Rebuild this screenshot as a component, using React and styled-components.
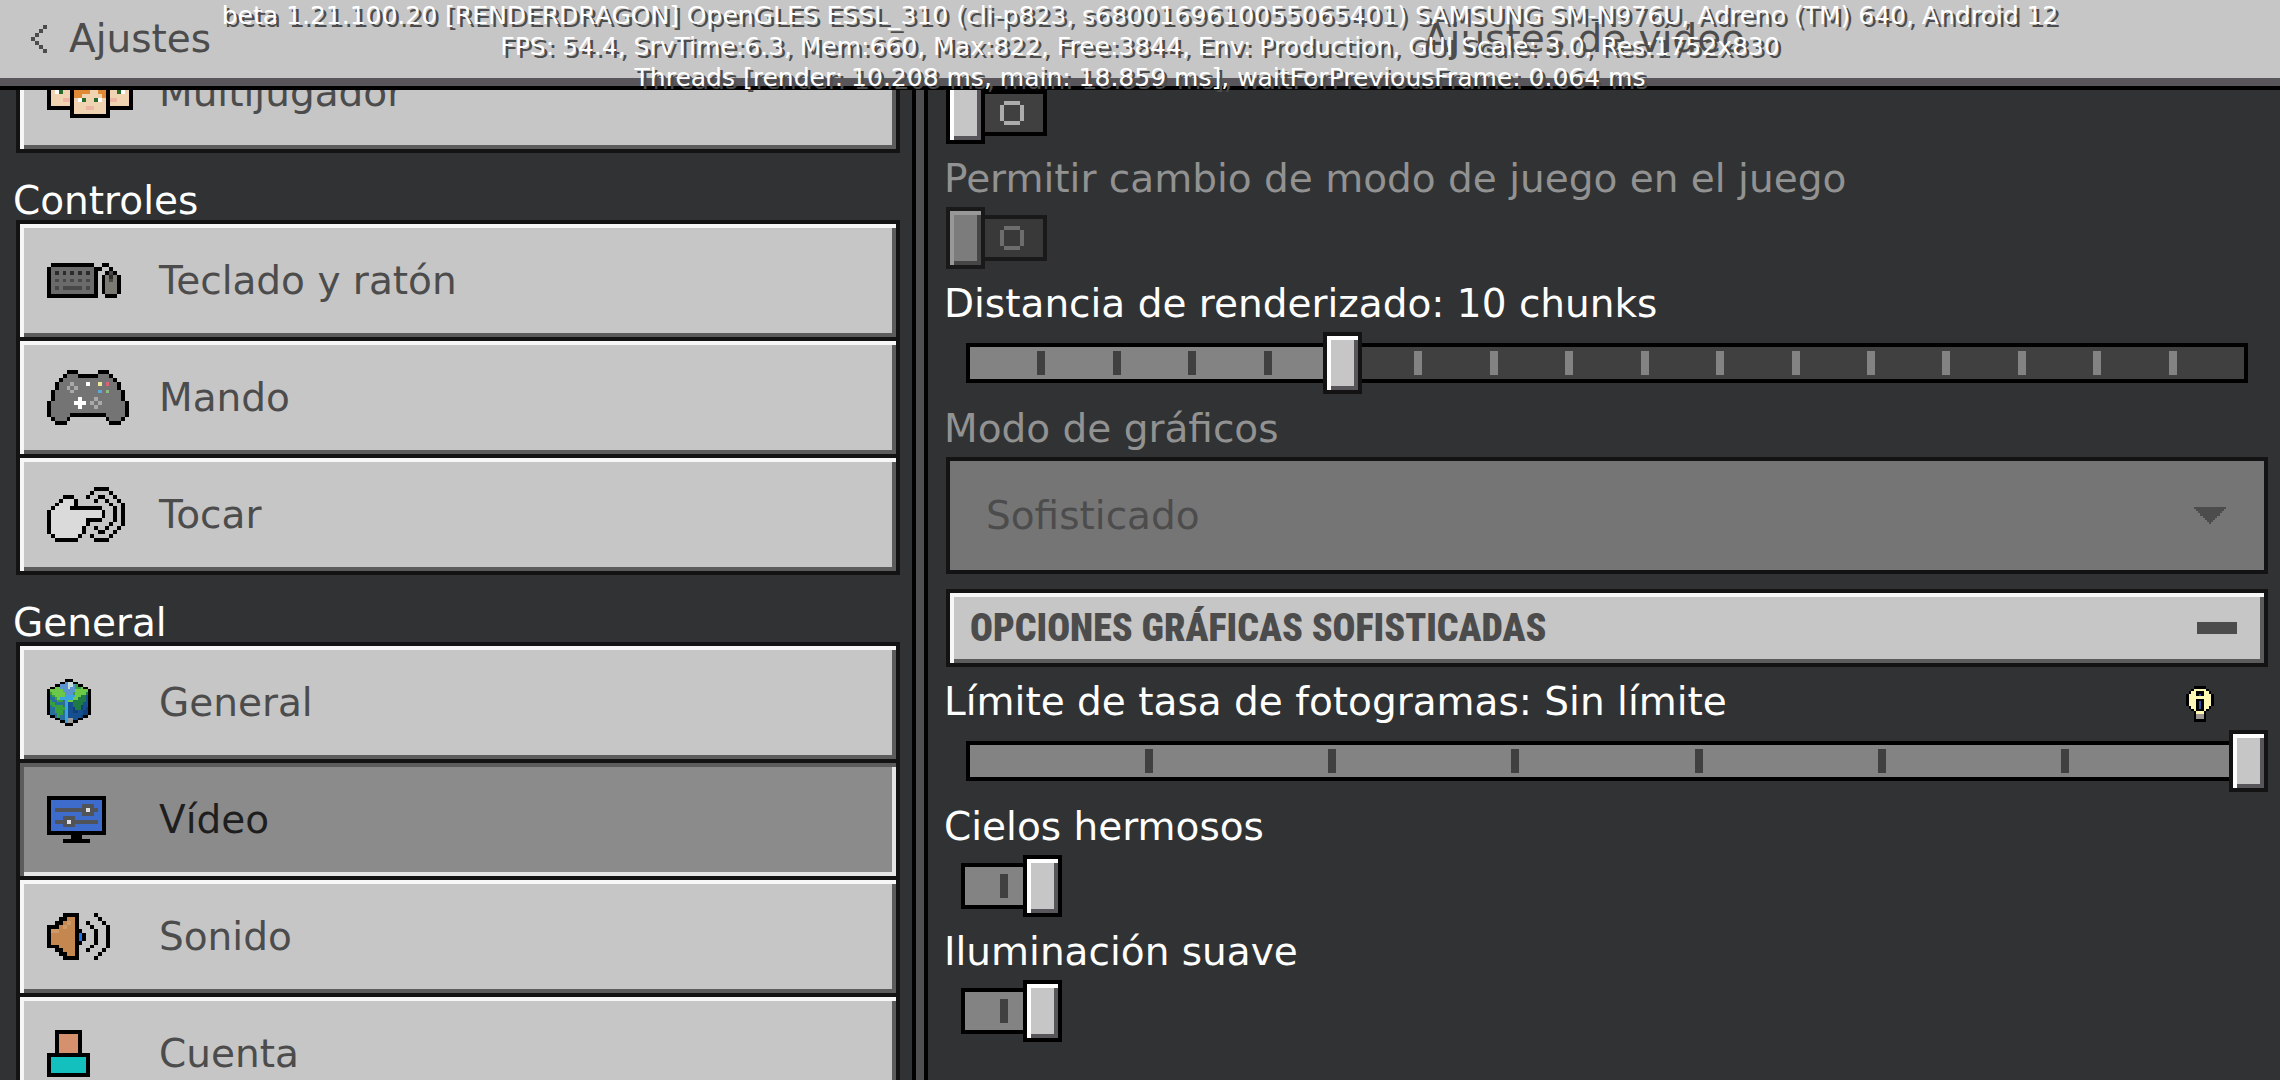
import React, { useLayoutEffect, useRef, useState } from "react";
import styled, { createGlobalStyle, css } from "styled-components";

const palette = {
  K: "#000000",
};

const icons = {
  players: {
    colors: { o: "#e08a35", s: "#f0d3b0", w: "#ffffff", e: "#2a6a2a", p: "#ecb5a4" },
    rows: [
      "......KKKKKKKKKK......",
      "......KooooooooK......",
      "KKKKKKKooooooooKKKKKKK",
      "KoooooKooooooooKoooooK",
      "KoooooKooooooooKoooooK",
      "KooossKooooooooKssoooK",
      "KswessKoooossooKssewsK",
      "KsssssKoosssssoKsssssK",
      "KsssppKswessewsKppsssK",
      "KsssssKssssssssKsssssK",
      "KKKKKKKsssppsssKKKKKKK",
      "......KssssssssK......",
      "......KKKKKKKKKK......",
    ],
  },
  keyboard: {
    colors: { g: "#6b6b6b", d: "#2b2b2b", n: "#484848", m: "#7b7972" },
    rows: [
      ".KKKKKKKKKKK..KK...",
      "KgggggggggggKK..K..",
      "KgdgdgdgdgdgK..KnK.",
      "KgggggggggggK.KmdmK",
      "KgngngngngngK.KmnmK",
      "KgggggggggggK.KmmmK",
      "KgngnnnnngngK.KmmmK",
      "KgggggggggggK.KmmmK",
      "KKKKKKKKKKKKK..KKK.",
    ],
  },
  gamepad: {
    colors: {
      g: "#747474",
      l: "#a9a9a9",
      w: "#ffffff",
      y: "#efe79a",
      r: "#d9627a",
      b: "#5aa7dc",
      e: "#93b985",
    },
    rows: [
      ".....KKK.....KKK.....",
      "....KgggKKKKKgggK....",
      "...KgggggggggggggK...",
      "..KggglgggwggygrggK..",
      "..KgglglggggggggggK..",
      ".KgggglggggggbgegggK.",
      ".KgggggggggggggggggK.",
      ".KggggggwggglggggggK.",
      "KggggggwwwglglggggggK",
      "KgggggggwggglgggggggK",
      "KgggggggggggggggggggK",
      "KgggggKKKKKKKKKgggggK",
      ".KgggK.........KgggK.",
      "..KKK...........KKK..",
    ],
  },
  touch: {
    colors: { w: "#dadada" },
    rows: [
      "............KKKK....",
      "...........K....K...",
      "....KKK...K..KK..K..",
      "...KwwwK....K..K..K.",
      "..KwwwwK........K..K",
      ".KwwwwKKKKKKKK...K.K",
      "KwwwwwwwwwwwwwK..K.K",
      "KwwwwwwwwwwwwwK..K.K",
      "KwwwwwwwwwKKKK...K.K",
      "KwwwwwwwwwK.....K..K",
      "KwwwwwwwwK..K..K..K.",
      "KwwwwwwwwK...KK..K..",
      ".KwwwwwwK..K....K...",
      "..KKKKKK....KKKK....",
    ],
  },
  globe: {
    colors: {
      b: "#5b93d0",
      w: "#c3dcdc",
      G: "#6cc848",
      g: "#35a03c",
      d: "#1f7b45",
      t: "#2a6f9c",
      c: "#3ba4e0",
      e: "#164f90",
      n: "#123f78",
      s: "#9c9c9c",
    },
    rows: [
      ".......KKK.......",
      ".....KKbwwKK.....",
      "...KKbbbwwbgKK...",
      ".KKGGbbbwbbggGKK.",
      "KGGGGGbbbbbGGGGGK",
      "KgGGGGGbbbgGGGGdK",
      "KtgGGGGccccGGddeK",
      "KttgGcccccGGdddeK",
      "KgttggtcGGdddddeK",
      "KggttttceeddddeeK",
      "KtggggtceedddneeK",
      "KttggggceenddnenK",
      "KttgggtceenneennK",
      "KtttggtceeeeeennK",
      ".KKtgttceeeeenKK.",
      "...KKttcsseeKK...",
      ".....KKcssKK.....",
      ".......KKK.......",
    ],
  },
  video: {
    colors: { b: "#3d6ccc", s: "#505358", w: "#e0e0e0" },
    rows: [
      "KKKKKKKKKKKKKKK",
      "KbbbbbbbbbbbbbK",
      "KbbbbbbbbsssbbK",
      "KbsssssssswssbK",
      "KbbbbbbbbsssbbK",
      "KbbbsssbbbbbbbK",
      "KbssswsssssssbK",
      "KbbbsssbbbbbbbK",
      "KbbbbbbbbbbbbbK",
      "KKKKKKKKKKKKKKK",
      "......KKK......",
      "....KKKKKKK....",
    ],
  },
  sound: {
    colors: { o: "#c4874f", l: "#cf9a6a", u: "#1f74ea" },
    rows: [
      "....KKKK....K...",
      "...KKooK.....K..",
      "..KKoloK..K...K.",
      "KKKolooK...K...K",
      "KllooooKK...K..K",
      "KooooooKuK..K..K",
      "KooooooKuK..K..K",
      "KooooooKK...K..K",
      "KKKooooK...K...K",
      "..KKoooK..K...K.",
      "...KKooK.....K..",
      "....KKKK....K...",
    ],
  },
  account: {
    colors: { s: "#d5906e", t: "#14c0bd" },
    rows: [
      "..KKKKKKK..",
      "..KsssssK..",
      "..KsssssK..",
      "..KsssssK..",
      "..KsssssK..",
      "..KsssssK..",
      "KKKKKKKKKKK",
      "KtttttttttK",
      "KtttttttttK",
      "KtttttttttK",
      "KtttttttttK",
      "KKKKKKKKKKK",
    ],
  },
  bulb: {
    colors: { y: "#fdf8b4", b: "#2c4f9e", h: "#9a9590" },
    rows: [
      "...KKKKK...",
      "..KyyyyyK..",
      ".KyyKKKyyK.",
      "KyyyKbKyyyK",
      "KyyyyyyyyyK",
      "KyyyKKKyyyK",
      "KyyyKbKyyyK",
      "KyyyKbKyyyK",
      ".KyyKbKyyK.",
      "..KyKKKyK..",
      "...KyyyK...",
      "...KhhhK...",
      "...KhhhK...",
      "...KKKKK...",
    ],
  },
  back: {
    colors: { g: "#4c4c4c" },
    rows: ["...g", "..g.", ".g..", "g...", ".g..", "..g.", "...g"],
  },
  off: {
    colors: { g: "currentColor" },
    rows: [".gggg.", "g....g", "g....g", "g....g", "g....g", ".gggg."],
  },
  arrow: {
    colors: { g: "#4c4c4c" },
    rows: [
      "ggggggggggggggg",
      ".ggggggggggggg.",
      "..ggggggggggg..",
      "...ggggggggg...",
      "....ggggggg....",
      ".....ggggg.....",
      "......ggg......",
      ".......g.......",
    ],
  },
};

function PixelIcon({ name, width }) {
  const { rows, colors } = icons[name];
  const cols = rows[0].length;
  const all = { ...palette, ...colors };
  return (
    <Pixels
      width={width}
      viewBox={`0 0 ${cols} ${rows.length}`}
      shapeRendering="crispEdges"
      aria-hidden="true"
    >
      {rows.map((row, y) =>
        [...row].map((c, x) =>
          c === "." ? null : (
            <rect key={`${x}-${y}`} x={x} y={y} width="1" height="1" fill={all[c]} />
          )
        )
      )}
    </Pixels>
  );
}

const menu = [
  { items: [{ id: "players", label: "Multijugador", width: 86 }] },
  {
    title: "Controles",
    items: [
      { id: "keyboard", label: "Teclado y ratón", width: 74 },
      { id: "gamepad", label: "Mando", width: 82 },
      { id: "touch", label: "Tocar", width: 78 },
    ],
  },
  {
    title: "General",
    items: [
      { id: "globe", label: "General", width: 44 },
      { id: "video", label: "Vídeo", width: 59 },
      { id: "sound", label: "Sonido", width: 63 },
      { id: "account", label: "Cuenta", width: 43 },
    ],
  },
];

const debugLines = [
  "beta 1.21.100.20 [RENDERDRAGON] OpenGLES ESSL_310 (cli-p823, s6800169610055065401) SAMSUNG SM-N976U, Adreno (TM) 640, Android 12",
  "FPS: 54.4, SrvTime:6.3, Mem:660, Max:822, Free:3844, Env: Production, GUI Scale: 3.0, Res:1752x830",
  "Threads [render: 10.208 ms, main: 18.859 ms], waitForPreviousFrame: 0.064 ms",
];

function Toggle({ id, label, defaultOn, disabled }) {
  const [on, setOn] = useState(!!defaultOn);
  return (
    <Setting>
      {label && (
        <SettingLabel htmlFor={id} $disabled={disabled}>
          {label}
        </SettingLabel>
      )}
      <Control>
        <ToggleBox $on={on} $disabled={disabled}>
          <ToggleInput
            id={id}
            type="checkbox"
            checked={on}
            disabled={disabled}
            aria-label={label ? undefined : "Interruptor"}
            onChange={() => setOn(!on)}
          />
          {on ? <OnMark /> : <PixelIcon name="off" width={24} />}
          <ToggleThumb $on={on} $disabled={disabled} />
        </ToggleBox>
      </Control>
    </Setting>
  );
}

function Slider({ id, min, max, value, onChange }) {
  const steps = max - min;
  return (
    <SliderBox>
      <Track $steps={steps}>
        {Array.from({ length: steps }, (_, i) => (
          <Segment key={i} $filled={min + i < value}>
            {i < steps - 1 && <Tick $filled={min + i < value} />}
          </Segment>
        ))}
      </Track>
      <Range
        id={id}
        type="range"
        min={min}
        max={max}
        value={value}
        onChange={(e) => onChange(Number(e.target.value))}
      />
    </SliderBox>
  );
}

export default function App() {
  const [current, setCurrent] = useState("video");
  const [distance, setDistance] = useState(10);
  const [limit, setLimit] = useState(7);
  const [open, setOpen] = useState(true);
  const sideRef = useRef(null);
  const panelRef = useRef(null);

  useLayoutEffect(() => {
    sideRef.current.scrollTop = 58;
    panelRef.current.scrollTop = 8;
  }, []);

  return (
    <Page>
      <GlobalStyle />
      <Header>
        <Back type="button">
          <PixelIcon name="back" width={16} />
          Ajustes
        </Back>
        <Title>Ajustes de vídeo</Title>
      </Header>
      <Main>
        <Sidebar ref={sideRef}>
          {menu.map((group, i) => (
            <div key={i}>
              {group.title && <GroupTitle>{group.title}</GroupTitle>}
              <Group>
                {group.items.map(({ id, label, width }) => (
                  <MenuButton
                    key={id}
                    type="button"
                    $active={id === current}
                    onClick={() => setCurrent(id)}
                  >
                    <IconSlot>
                      <PixelIcon name={id} width={width} />
                    </IconSlot>
                    {label}
                  </MenuButton>
                ))}
              </Group>
            </div>
          ))}
        </Sidebar>
        <Divider />
        <Panel ref={panelRef}>
          <Toggle id="previous" />
          <Toggle
            id="gamemode"
            label="Permitir cambio de modo de juego en el juego"
            disabled
          />
          <Setting>
            <SettingLabel htmlFor="distance">
              Distancia de renderizado: {distance} chunks
            </SettingLabel>
            <Control>
              <Slider id="distance" min={5} max={22} value={distance} onChange={setDistance} />
            </Control>
          </Setting>
          <Setting>
            <SettingLabel htmlFor="graphics" $disabled>
              Modo de gráficos
            </SettingLabel>
            <Control>
              <SelectBox>
                <Select id="graphics" disabled>
                  <option>Sofisticado</option>
                </Select>
                <PixelIcon name="arrow" width={32} />
              </SelectBox>
            </Control>
          </Setting>
          <Setting>
            <Control>
              <Accordion type="button" aria-expanded={open} onClick={() => setOpen(!open)}>
                Opciones gráficas sofisticadas
                <Minus />
              </Accordion>
            </Control>
          </Setting>
          {open && (
            <>
              <Setting>
                <LabelRow>
                  <SettingLabel htmlFor="limit">
                    Límite de tasa de fotogramas: {limit === 7 ? "Sin límite" : limit * 30}
                  </SettingLabel>
                  <PixelIcon name="bulb" width={28} />
                </LabelRow>
                <Control>
                  <Slider id="limit" min={0} max={7} value={limit} onChange={setLimit} />
                </Control>
              </Setting>
              <Toggle id="skies" label="Cielos hermosos" defaultOn />
              <Toggle id="lighting" label="Iluminación suave" defaultOn />
            </>
          )}
        </Panel>
      </Main>
      <Debug>
        {debugLines.map((line) => (
          <div key={line}>{line}</div>
        ))}
      </Debug>
    </Page>
  );
}

const GlobalStyle = createGlobalStyle`
  * {
    box-sizing: border-box;
  }
  body {
    margin: 0;
    background: #313233;
    font-family: "DejaVu Sans", sans-serif;
    font-size: 39px;
    line-height: 40px;
  }
  button, select, input {
    font: inherit;
    margin: 0;
  }
`;

const Pixels = styled.svg`
  display: block;
  flex: none;
  height: auto;
`;

const bevel = css`
  box-shadow: inset 4px 4px #f7f7f7, inset -4px -4px #5c5c5c;
`;

const Page = styled.div`
  position: relative;
  display: flex;
  flex-direction: column;
  height: 100vh;
  overflow: hidden;
`;

const Header = styled.header`
  display: grid;
  grid-template-columns: 40% 1fr;
  align-items: center;
  flex: none;
  height: 90px;
  color: #4c4c4c;
  background: #c6c6c6;
  border-bottom: 4px solid #000;
  box-shadow: inset 0 -8px #58565a;
  padding-bottom: 8px;
`;

const Back = styled.button`
  display: flex;
  align-items: center;
  gap: 22px;
  padding: 0 0 0 31px;
  border: 0;
  background: none;
  color: inherit;
  cursor: pointer;
`;

const Title = styled.h1`
  margin: 0;
  padding-right: 24px;
  font-size: inherit;
  font-weight: normal;
  text-align: center;
`;

const Main = styled.main`
  display: grid;
  grid-template-columns: 40% 16px 1fr;
  grid-template-rows: 100%;
  flex: 1;
  min-height: 0;
`;

const column = css`
  overflow-y: auto;
  scrollbar-width: none;
`;

const Sidebar = styled.nav`
  ${column}
  padding: 0 12px 40px 16px;
`;

const GroupTitle = styled.h2`
  margin: 29px 0 0 -3px;
  color: #fff;
  font-size: inherit;
  font-weight: normal;
  line-height: 38px;
`;

const Group = styled.div`
  display: flex;
  flex-direction: column;
  gap: 4px;
  padding: 4px;
  background: #131313;
`;

const MenuButton = styled.button`
  display: flex;
  align-items: center;
  height: 113px;
  padding: 0 27px;
  border: 0;
  color: #4c4c4c;
  background: #c6c6c6;
  text-align: left;
  cursor: pointer;
  ${bevel}
  ${({ $active }) =>
    $active &&
    css`
      color: #1e1e1f;
      background: #8b8b8b;
      box-shadow: inset 4px 4px #5c5c5c, inset -4px -4px #e6e6e6;
    `}
`;

const IconSlot = styled.span`
  flex: none;
  width: 112px;
`;

const Divider = styled.div`
  background: #4f4f52;
  border: solid #000;
  border-width: 0 4px;
`;

const Panel = styled.section`
  ${column}
  padding: 0 12px 60px 16px;
`;

const Setting = styled.div`
  display: flex;
  flex-direction: column;
  gap: 8px;
  margin-bottom: 15px;
`;

const SettingLabel = styled.label`
  color: ${({ $disabled }) => ($disabled ? "#929292" : "#fff")};
`;

const LabelRow = styled.div`
  display: flex;
  align-items: flex-end;
  justify-content: space-between;
  padding-right: 54px;
`;

const Control = styled.div`
  padding-left: 2px;
`;

const ToggleBox = styled.div`
  position: relative;
  display: flex;
  align-items: center;
  width: 86px;
  height: 46px;
  margin: 8px 15px;
  padding-left: 35px;
  border: 4px solid ${({ $disabled }) => ($disabled ? "#191919" : "#000")};
  background: ${({ $on, $disabled }) => ($on ? "#838383" : $disabled ? "#393939" : "#404040")};
  color: ${({ $disabled }) => ($disabled ? "#6d6d6d" : "#acacac")};
`;

const ToggleInput = styled.input`
  position: absolute;
  inset: 0;
  z-index: 1;
  width: 100%;
  height: 100%;
  opacity: 0;
  cursor: pointer;
`;

const OnMark = styled.span`
  width: 8px;
  height: 24px;
  background: #404040;
`;

const ToggleThumb = styled.span`
  position: absolute;
  top: -12px;
  ${({ $on }) => ($on ? "right: -19px;" : "left: -19px;")}
  width: 39px;
  height: 62px;
  border: 4px solid #000;
  background: #c6c6c6;
  box-shadow: inset 4px 4px #fff, inset -4px -4px #58565a;
  ${({ $disabled }) =>
    $disabled &&
    css`
      border-color: #191919;
      background: #7c7c7c;
      box-shadow: inset 4px 4px #989898, inset -4px -4px #454545;
    `}
`;

const SliderBox = styled.div`
  position: relative;
  display: flex;
  align-items: center;
  height: 62px;
  padding: 0 20px;
`;

const Track = styled.div`
  display: grid;
  grid-template-columns: repeat(${({ $steps }) => $steps}, 1fr);
  flex: 1;
  height: 40px;
  padding: 4px 0;
  background: #000;
`;

const Segment = styled.div`
  display: flex;
  align-items: center;
  justify-content: flex-end;
  background: ${({ $filled }) => ($filled ? "#838383" : "#404040")};
  &:first-child {
    border-left: 4px solid #000;
  }
  &:last-child {
    border-right: 4px solid #000;
  }
`;

const Tick = styled.span`
  z-index: 1;
  width: 8px;
  height: 24px;
  margin-right: -4px;
  background: ${({ $filled }) => ($filled ? "#404040" : "#838383")};
`;

const Range = styled.input`
  position: absolute;
  inset: 0;
  z-index: 2;
  width: 100%;
  height: 100%;
  appearance: none;
  background: none;
  cursor: pointer;
  &::-webkit-slider-thumb {
    appearance: none;
    width: 39px;
    height: 62px;
    border: 4px solid #131313;
    background: #c6c6c6;
    box-shadow: inset 4px 4px #fff, inset -4px -4px #58565a;
  }
`;

const SelectBox = styled.div`
  display: flex;
  align-items: center;
  height: 117px;
  padding-right: 38px;
  border: 4px solid #131313;
  background: #757575;
`;

const Select = styled.select`
  flex: 1;
  height: 100%;
  padding: 0 0 0 36px;
  appearance: none;
  border: 0;
  background: none;
  color: #4c4c4c;
  opacity: 1;
`;

const Accordion = styled.button`
  display: flex;
  align-items: center;
  justify-content: space-between;
  width: 100%;
  height: 78px;
  padding: 0 27px 0 20px;
  border: 4px solid #131313;
  color: #4c4c4c;
  background: #c6c6c6;
  font-family: "Roboto Condensed", Roboto, sans-serif;
  font-size: 38px;
  font-weight: 900;
  text-transform: uppercase;
  cursor: pointer;
  ${bevel}
`;

const Minus = styled.span`
  width: 40px;
  height: 12px;
  background: #4c4c4c;
`;

const Debug = styled.div`
  position: absolute;
  top: 0;
  left: 0;
  right: 0;
  z-index: 3;
  color: #fff;
  font-size: 25px;
  line-height: 31px;
  text-align: center;
  text-shadow: 3px 3px #4c4c4c;
  white-space: nowrap;
  pointer-events: none;
`;
